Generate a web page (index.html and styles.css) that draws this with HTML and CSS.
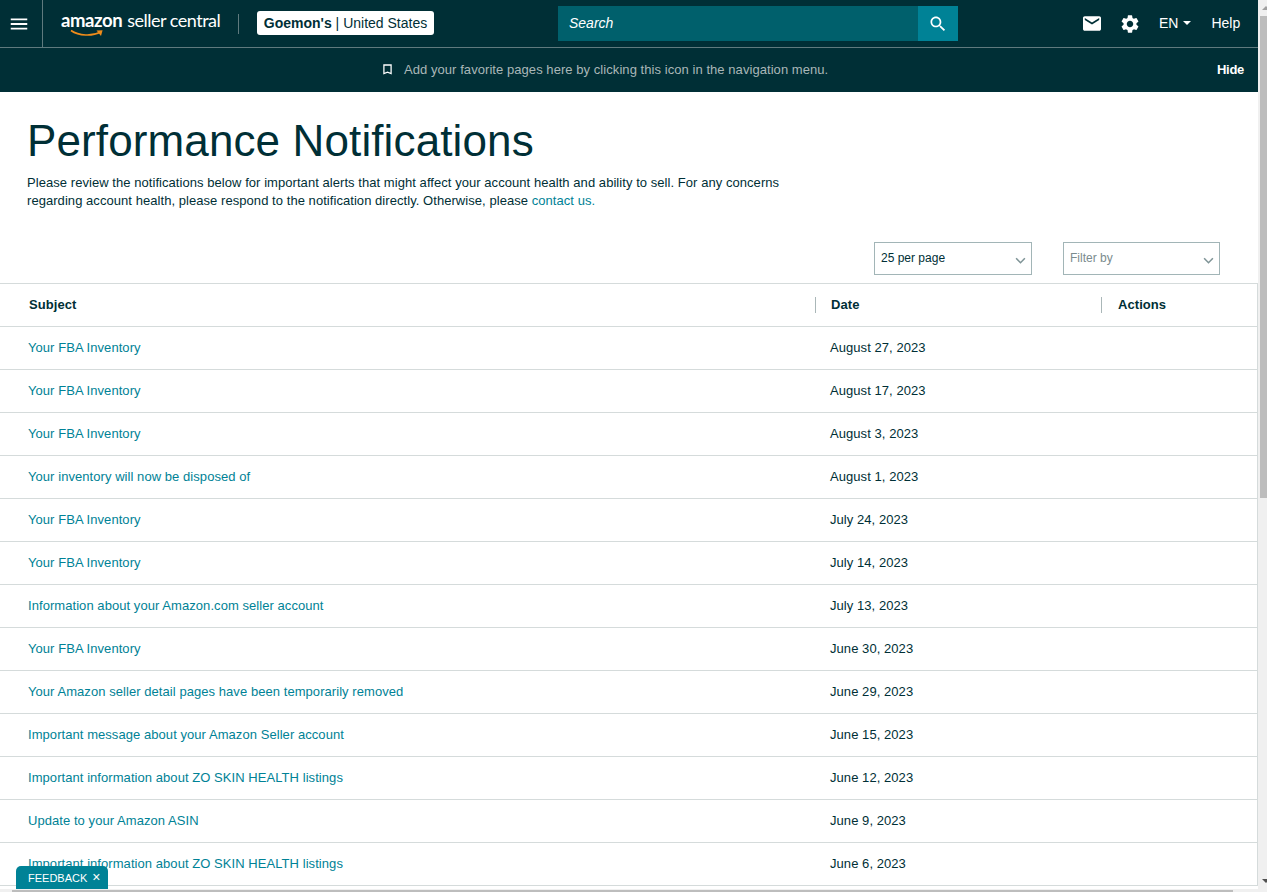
FILE: index.html
```html
<!DOCTYPE HTML>
<html>
<head>
  <meta name="viewport" content="width=device-width, initial-scale=1">
  <link rel="icon" href="data:,">
  <link rel="stylesheet" href="styles.css">
  <title>Performance Notifications</title>
</head>
<body>
<div class="window">
  <div class="page">
    <header class="nav">
      <div class="menu-btn">
        <svg class="icon-menu" viewBox="0 0 24 24"><path d="M3 18h18v-2H3v2zm0-5h18v-2H3v2zm0-7v2h18V6H3z"/></svg>
      </div>
      <a class="logo" href="#">
        <span class="logo-amazon">amazon</span><span class="logo-seller">seller central</span>
        <svg class="logo-smile" viewBox="0 0 34 9"><path d="M1 1.5C9 7 22 7.5 31 3" fill="none" stroke="#f08c1a" stroke-width="1.6"/><path d="M26.5 1.6L32.6 1.2 31 7z" fill="#f08c1a"/></svg>
      </a>
      <div class="logo-sep"></div>
      <div class="account"><b>Goemon's</b> | United States</div>
      <div class="search">
        <span class="search-text">Search</span>
        <div class="search-btn">
          <svg viewBox="0 0 24 24"><path d="M15.5 14h-.79l-.28-.27C15.41 12.59 16 11.11 16 9.5 16 5.91 13.09 3 9.5 3S3 5.91 3 9.5 5.91 16 9.5 16c1.61 0 3.09-.59 4.23-1.57l.27.28v.79l5 4.99L20.49 19l-4.99-5zm-6 0C7.01 14 5 11.99 5 9.5S7.01 5 9.5 5 14 7.01 14 9.5 11.99 14 9.5 14z"/></svg>
        </div>
      </div>
      <div class="nav-right">
        <svg class="icon-mail" viewBox="2 4 20 16"><path d="M20 4H4c-1.1 0-2 .9-2 2v12c0 1.1.9 2 2 2h16c1.1 0 2-.9 2-2V6c0-1.1-.9-2-2-2zm0 4l-8 5-8-5V6l8 5 8-5v2z"/></svg>
        <svg class="icon-gear" viewBox="2 2 20 20"><path d="M19.14 12.94c.04-.3.06-.61.06-.94 0-.32-.02-.64-.07-.94l2.03-1.58a.49.49 0 0 0 .12-.61l-1.92-3.32a.488.488 0 0 0-.59-.22l-2.39.96c-.5-.38-1.03-.7-1.62-.94l-.36-2.54a.484.484 0 0 0-.48-.41h-3.84c-.24 0-.43.17-.47.41l-.36 2.54c-.59.24-1.13.57-1.62.94l-2.39-.96c-.22-.08-.47 0-.59.22L2.74 8.87c-.12.21-.08.47.12.61l2.03 1.58c-.05.3-.09.63-.09.94s.02.64.07.94l-2.03 1.58a.49.49 0 0 0-.12.61l1.92 3.32c.12.22.37.29.59.22l2.39-.96c.5.38 1.03.7 1.62.94l.36 2.54c.05.24.24.41.48.41h3.84c.24 0 .44-.17.47-.41l.36-2.54c.59-.24 1.13-.56 1.62-.94l2.39.96c.22.08.47 0 .59-.22l1.92-3.32c.12-.22.07-.47-.12-.61l-2.01-1.58zM12 15.6c-1.98 0-3.6-1.62-3.6-3.6s1.62-3.6 3.6-3.6 3.6 1.62 3.6 3.6-1.62 3.6-3.6 3.6z"/></svg>
        <span class="lang">EN<i class="caret"></i></span>
        <span class="help">Help</span>
      </div>
    </header>

    <div class="fav-bar">
      <div class="fav-msg">
        <svg class="icon-bookmark" viewBox="0 0 10 12"><path d="M1 1h8v9.6L5 9 1 10.6z" fill="none" stroke="#fff" stroke-width="1.4"/></svg>
        <span>Add your favorite pages here by clicking this icon in the navigation menu.</span>
      </div>
      <span class="hide">Hide</span>
    </div>

    <main class="content">
      <h1>Performance Notifications</h1>
      <p class="intro">Please review the notifications below for important alerts that might affect your account health and ability to sell. For any concerns regarding account health, please respond to the notification directly. Otherwise, please <a href="#">contact us.</a></p>

      <div class="filters">
        <div class="select select-page">25 per page
          <svg viewBox="0 0 12 8"><path d="M1 1.5l5 5 5-5" fill="none" stroke="#7f9497" stroke-width="1.8"/></svg>
        </div>
        <div class="select select-filter">Filter by
          <svg viewBox="0 0 12 8"><path d="M1 1.5l5 5 5-5" fill="none" stroke="#7f9497" stroke-width="1.8"/></svg>
        </div>
      </div>

      <div class="table">
        <div class="row head">
          <div class="col-subject">Subject</div>
          <div class="col-date">Date</div>
          <div class="col-actions">Actions</div>
        </div>
        <div class="row"><a class="col-subject" href="#">Your FBA Inventory</a><div class="col-date">August 27, 2023</div></div>
        <div class="row"><a class="col-subject" href="#">Your FBA Inventory</a><div class="col-date">August 17, 2023</div></div>
        <div class="row"><a class="col-subject" href="#">Your FBA Inventory</a><div class="col-date">August 3, 2023</div></div>
        <div class="row"><a class="col-subject" href="#">Your inventory will now be disposed of</a><div class="col-date">August 1, 2023</div></div>
        <div class="row"><a class="col-subject" href="#">Your FBA Inventory</a><div class="col-date">July 24, 2023</div></div>
        <div class="row"><a class="col-subject" href="#">Your FBA Inventory</a><div class="col-date">July 14, 2023</div></div>
        <div class="row"><a class="col-subject" href="#">Information about your Amazon.com seller account</a><div class="col-date">July 13, 2023</div></div>
        <div class="row"><a class="col-subject" href="#">Your FBA Inventory</a><div class="col-date">June 30, 2023</div></div>
        <div class="row"><a class="col-subject" href="#">Your Amazon seller detail pages have been temporarily removed</a><div class="col-date">June 29, 2023</div></div>
        <div class="row"><a class="col-subject" href="#">Important message about your Amazon Seller account</a><div class="col-date">June 15, 2023</div></div>
        <div class="row"><a class="col-subject" href="#">Important information about ZO SKIN HEALTH listings</a><div class="col-date">June 12, 2023</div></div>
        <div class="row"><a class="col-subject" href="#">Update to your Amazon ASIN</a><div class="col-date">June 9, 2023</div></div>
        <div class="row"><a class="col-subject" href="#">Important information about ZO SKIN HEALTH listings</a><div class="col-date">June 6, 2023</div></div>
      </div>
    </main>

    <div class="feedback">FEEDBACK<span class="feedback-x">&times;</span></div>
  </div>

  <div class="vscroll">
    <div class="arrow-up"></div>
    <div class="vthumb"></div>
    <div class="arrow-down"></div>
  </div>
</div>
<div class="hscroll"><div class="hthumb"></div></div>
</body>
</html>
```

FILE: styles.css
```css
html, body {margin: 0; padding: 0; height: 100%; overflow: hidden;}
body {font-family: "Liberation Sans", Arial, sans-serif; font-size: 14px; color: #002f36; background: #fff; display: flex; flex-direction: column;}
a {color: #008296; text-decoration: none;}

.window {flex: 1; min-height: 0; display: flex;}
.page {flex: 1; min-width: 0; position: relative; overflow: hidden;}

/* top nav */
.nav {height: 47px; background: #002f36; border-bottom: 1px solid #5f7a7e; display: flex; align-items: center; color: #fff;}
.menu-btn {width: 42px; height: 47px; border-right: 1px solid #5f7a7e; display: flex; align-items: center; justify-content: center; box-sizing: content-box;}
.icon-menu {width: 22px; height: 22px; fill: #fff; margin-left: -4px;}
.logo {position: relative; display: flex; align-items: baseline; margin-left: 18px; width: 159px; height: 30px; color: #fff; font-family: "Lato", "Open Sans", sans-serif; white-space: nowrap; margin-top: -4px;}
.logo-amazon {font-size: 18.5px; font-weight: 700; line-height: 27px; letter-spacing: -.4px;}
.logo-seller {font-size: 18px; font-weight: 400; margin-left: 5px; line-height: 27px; letter-spacing: -.5px;}
.logo-smile {position: absolute; left: 9px; top: 22px; width: 34px; height: 9px;}
.logo-sep {width: 1px; height: 20px; background: #5f7a7e; margin-left: 18px;}
.account {margin: -1px 0 0 18px; width: 177px; height: 24px; box-sizing: border-box; background: #fff; border-radius: 3px; color: #002f36; font-size: 14px; line-height: 25px; text-align: center; white-space: nowrap;}
.search {margin-left: 124px; width: 400px; height: 35px; background: #00606c; display: flex; align-items: center; justify-content: space-between;}
.search-text {font-style: italic; padding: 0 0 2px 11px; font-size: 14px; color: #fff;}
.search-btn {width: 40px; height: 35px; background: #008296; display: flex; align-items: center; justify-content: center;}
.search-btn svg {width: 20px; height: 20px; fill: #fff;}
.nav-right {margin-left: 125px; display: flex; align-items: center;}
.icon-mail {width: 18px; height: 15px; fill: #fff;}
.icon-gear {width: 18px; height: 18px; fill: #fff; margin-left: 20px;}
.lang {margin-left: 20px; padding-bottom: 2px; font-size: 14px; display: flex; align-items: center;}
.caret {width: 0; height: 0; border: 4.5px solid transparent; border-top: 4.5px solid #fff; border-bottom: 0; margin-left: 5px;}
.help {margin-left: 20px; padding-bottom: 2px; font-size: 14px;}

/* favorites bar */
.fav-bar {height: 44px; background: #002f36; display: flex; align-items: center; color: #aab7b8; position: relative;}
.fav-msg {display: flex; align-items: center; margin-left: 383px; padding-bottom: 2px; font-size: 13px; letter-spacing: .06px;}
.icon-bookmark {width: 9px; height: 11px; margin-right: 12px;}
.hide {margin-left: auto; margin-right: 14px; padding-bottom: 2px; color: #fff; font-size: 13px; font-weight: 700; letter-spacing: -.3px;}

/* page body */
.content {padding-top: 23px;}
h1 {font-size: 44px; font-weight: 400; line-height: 52px; margin: 0 0 0 27px; color: #002f36; letter-spacing: .12px;}
.intro {width: 770px; margin: 7px 0 0 27px; font-size: 13px; line-height: 18px; color: #002f36; letter-spacing: .055px;}
.filters {display: flex; justify-content: flex-end; gap: 31px; padding-right: 38px; margin-top: 32px;}
.select {height: 33px; box-sizing: border-box; border: 1px solid #a2b5b7; padding: 0 6px; font-size: 12px; line-height: 30px; position: relative; background: #fff;}
.select svg {position: absolute; right: 5px; top: 14px; width: 11px; height: 7px;}
.select-page {width: 158px;}
.select-filter {width: 157px; color: #7b8c8e;}

/* table */
.table {margin-top: 8px; border-top: 1px solid #d5dbdb; border-right: 1px solid #d5dbdb;}
.row {display: flex; align-items: center; height: 43px; padding-bottom: 2px; box-sizing: border-box; border-bottom: 1px solid #d5dbdb; font-size: 13px; letter-spacing: .06px;}
.col-subject {width: 802px; margin-left: 28px; flex-shrink: 0;}
.col-date {width: 272px; flex-shrink: 0;}
.head {font-weight: 700; padding-bottom: 0;}
.head .col-subject {margin-left: 29px; width: 786px; line-height: 16px;}
.head .col-date {width: 270px; padding-left: 15px; border-left: 1px solid #aab7b8; line-height: 16px;}
.head .col-actions {padding-left: 16px; border-left: 1px solid #aab7b8; line-height: 16px;}

/* feedback tab */
.feedback {position: absolute; left: 16px; bottom: 0; height: 23px; width: 92px; box-sizing: border-box; background: #008296; color: #fff; border-radius: 5px 5px 0 0; font-size: 11px; line-height: 23px; padding-left: 12px;}
.feedback-x {margin-left: 5px; font-size: 14px;}

/* window scrollbars */
.vscroll {width: 9px; background: #f0f0f0; display: flex; flex-direction: column; overflow: hidden;}
.arrow-up {width: 0; height: 0; flex-shrink: 0; border-left: 4px solid transparent; border-right: 4px solid transparent; border-bottom: 4px solid #a0a0a0; margin: 6px 0 0 4px;}
.vthumb {width: 7px; height: 482px; flex-shrink: 0; margin: 6px 0 0 2px; background: #bdbdbd;}
.arrow-down {width: 0; height: 0; flex-shrink: 0; border-left: 4px solid transparent; border-right: 4px solid transparent; border-top: 4px solid #505050; margin: auto 0 6px 4px;}
.hscroll {height: 3px; background: #f0f0f0; flex-shrink: 0; overflow: hidden;}
.hthumb {width: 1221px; height: 2px; margin: 1px 0 0 12px; background: #bdbdbd;}
```
